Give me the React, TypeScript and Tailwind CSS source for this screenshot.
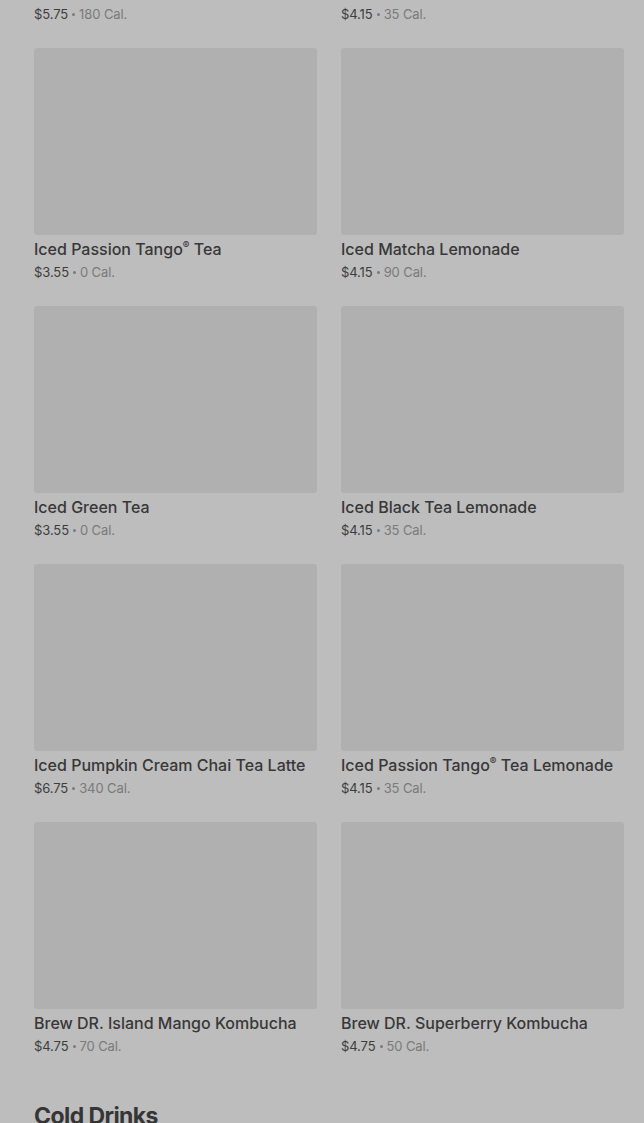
import React from 'react';

type Drink = { name: string; price: string; cal: string };

const drinks: Drink[] = [
  { name: 'Iced Chai Tea Latte', price: '$5.75', cal: '180' },
  { name: 'Iced Black Tea', price: '$4.15', cal: '35' },
  { name: 'Iced Passion Tango® Tea', price: '$3.55', cal: '0' },
  { name: 'Iced Matcha Lemonade', price: '$4.15', cal: '90' },
  { name: 'Iced Green Tea', price: '$3.55', cal: '0' },
  { name: 'Iced Black Tea Lemonade', price: '$4.15', cal: '35' },
  { name: 'Iced Pumpkin Cream Chai Tea Latte', price: '$6.75', cal: '340' },
  { name: 'Iced Passion Tango® Tea Lemonade', price: '$4.15', cal: '35' },
  { name: 'Brew DR. Island Mango Kombucha', price: '$4.75', cal: '70' },
  { name: 'Brew DR. Superberry Kombucha', price: '$4.75', cal: '50' },
];

export default function App() {
  return (
    <div
      className="h-[1123px] w-full overflow-hidden bg-[#bdbdbd]"
      style={{ fontFamily: 'Inter, "Noto Sans", sans-serif' }}
    >
      {/* page is scrolled: first row sits above the fold */}
      <div className="-mt-[210px] pl-[34px] pr-[20px]">
        <section className="grid grid-cols-2 gap-x-6 gap-y-6">
          {drinks.map((d) => (
            <DrinkCard key={d.name} drink={d} />
          ))}
        </section>

        <h2 className="mt-[44px] text-[23px] leading-[32px] font-bold tracking-tight text-[#353535]">
          Cold Drinks
        </h2>
      </div>
    </div>
  );
}

function Name({ text }: { text: string }) {
  // ® sits small and raised in the reference
  const parts = text.split('®');
  return (
    <>
      {parts.map((p, i) => (
        <React.Fragment key={i}>
          {p}
          {i < parts.length - 1 && (
            <span className="relative -top-[6px] text-[10px] leading-none">®</span>
          )}
        </React.Fragment>
      ))}
    </>
  );
}

function DrinkCard({ drink }: { drink: Drink }) {
  return (
    <div className="flex flex-col">
      <div className="h-[187px] rounded-[3px] bg-[#b0b0b0]" />
      <h3 className="mt-[3px] h-[22px] text-[16px] leading-[22px] font-medium text-[#383838] whitespace-nowrap">
        <Name text={drink.name} />
      </h3>
      <p className="mt-[2px] flex h-[20px] items-center text-[13px] leading-[20px] tracking-[-0.1px] text-[#7a7a7a]">
        <span className="text-[#3d3d3d]">{drink.price}</span>
        <span className="mx-[4px] inline-block h-[3px] w-[3px] rounded-full bg-[#7a7a7a]" />
        <span>{drink.cal} Cal.</span>
      </p>
    </div>
  );
}
